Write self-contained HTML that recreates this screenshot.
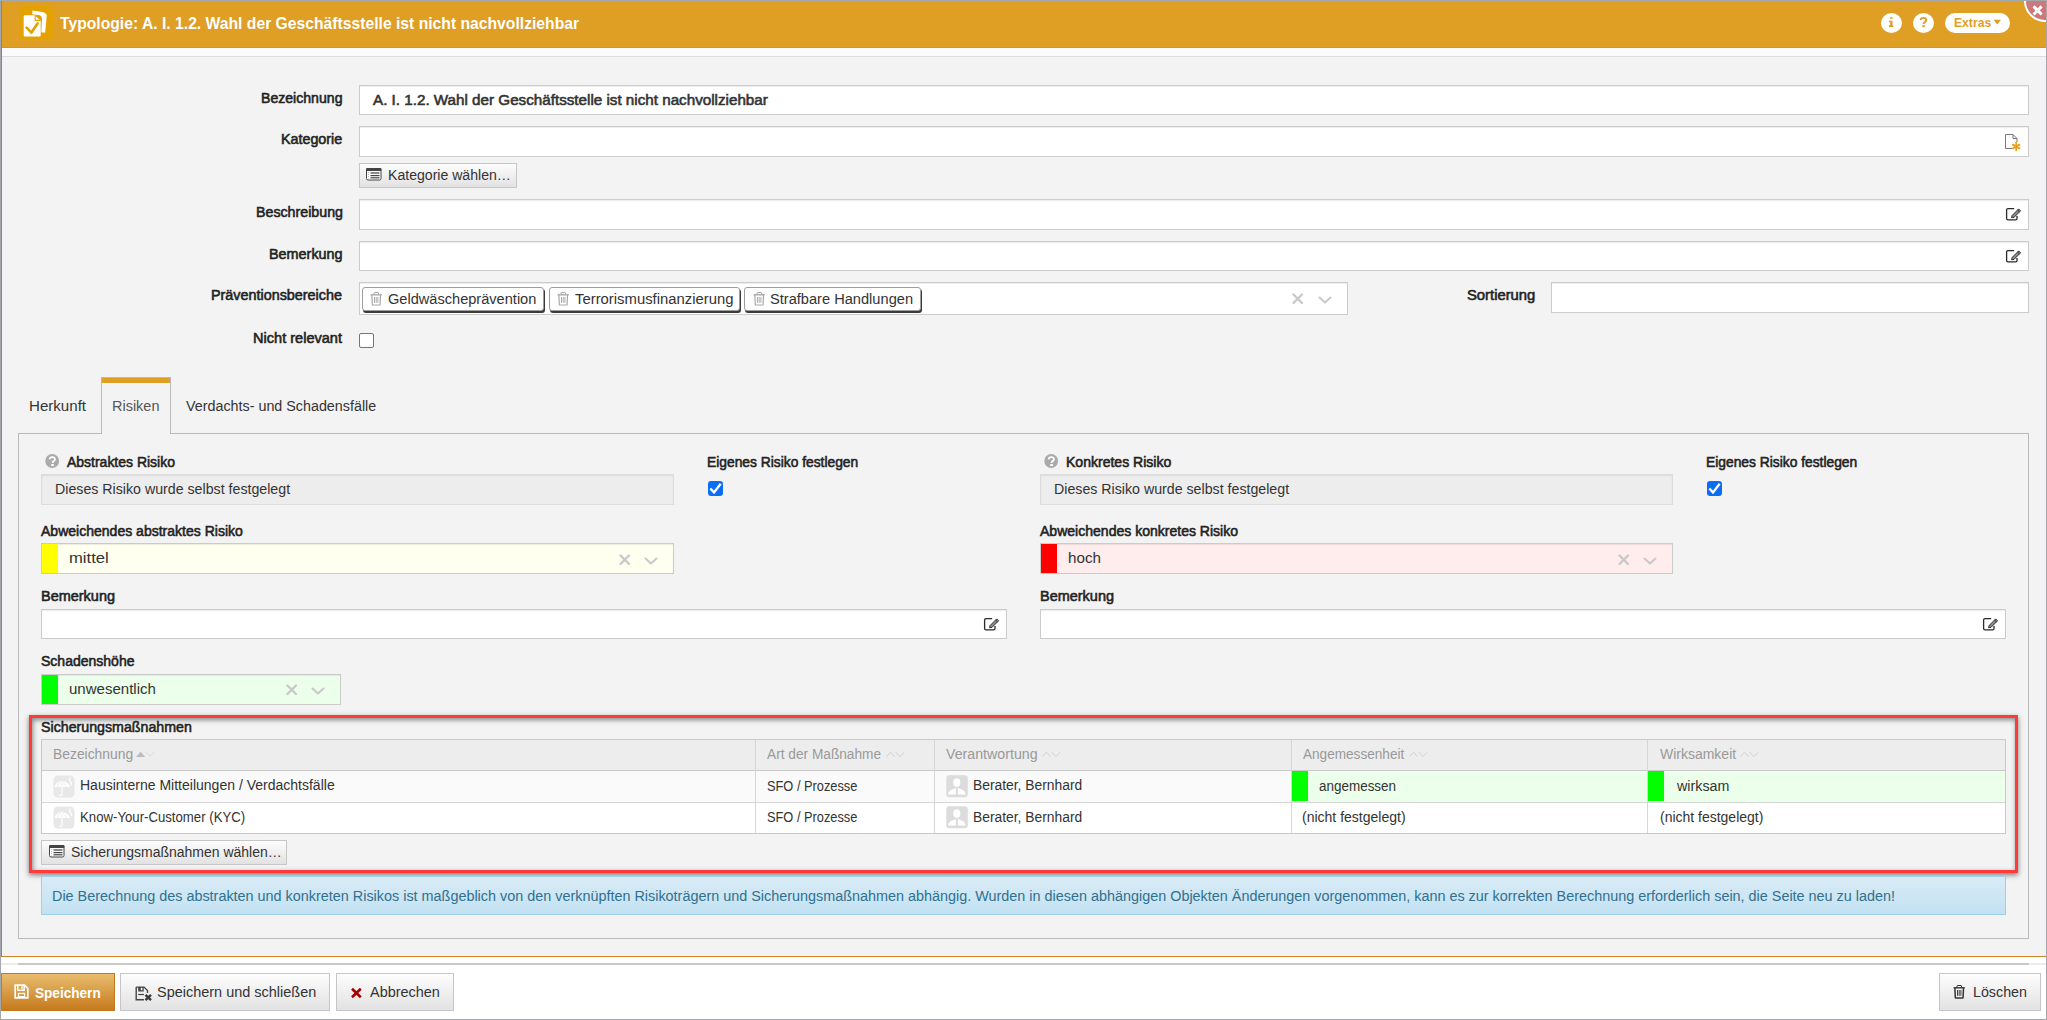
<!DOCTYPE html>
<html><head><meta charset="utf-8"><title>Typologie</title>
<style>
html,body{margin:0;padding:0;width:2047px;height:1020px;overflow:hidden;background:#f3f3f3;font-family:"Liberation Sans",sans-serif;position:relative}
.a{position:absolute;box-sizing:border-box}
.t{position:absolute;white-space:nowrap;line-height:1;transform-origin:0 0;font-family:"Liberation Sans",sans-serif}
.inp{position:absolute;box-sizing:border-box;background:#fff;border:1px solid #cbcbcb;box-shadow:inset 0 1px 1px rgba(0,0,0,.075)}
.btn{position:absolute;box-sizing:border-box;border:1px solid #c6c6c6;background:linear-gradient(#fdfdfd,#e2e2e2)}
.chip{position:absolute;box-sizing:border-box;background:#fff;border:1px solid #9e9e9e;border-radius:3px;box-shadow:1px 2px 0 #3a3a3a}
svg{position:absolute;overflow:visible}

</style></head><body>
<!-- window frame -->
<div class="a" style="left:0;top:0;width:2047px;height:1px;background:#a4a8ac"></div>
<div class="a" style="left:0;top:0;width:1px;height:1020px;background:#a4a8ac"></div>
<div class="a" style="left:2046px;top:0;width:1px;height:1020px;background:#a4a8ac"></div>
<div class="a" style="left:0;top:1019px;width:2047px;height:1px;background:#a4a8ac"></div>
<!-- header -->
<div class="a" style="left:1px;top:1px;width:2045px;height:47px;background:#df9e24;border-bottom:1px solid #dd9418"></div>
<div class="a" style="left:1px;top:1px;width:1px;height:956px;background:#c7791a"></div>
<div class="a" style="left:1px;top:956px;width:2045px;height:1px;background:#cf8424"></div>
<div class="a" style="left:2px;top:48px;width:2044px;height:8px;background:#fbfbfb"></div>
<div class="a" style="left:2px;top:56px;width:2044px;height:1px;background:#dcdcdc"></div>
<!-- header icon -->
<div class="a" style="left:19px;top:6px;width:34px;height:34px;border-radius:5px;background:#e4a200"></div>
<svg style="left:19px;top:6px" width="34" height="34" viewBox="0 0 34 34">
 <path d="M13.5 4.6 L24.5 6.3 Q26.5 6.8 27.8 9 L26.2 26.8 L22.3 26.3 L23 12.5 Q22.8 10.3 20.8 9.3 L13.2 8.2 Z" fill="#fff"/>
 <path d="M6 9.2 L15.8 9.2 L21.7 14.8 L21.7 29.2 Q21.7 30.4 20.5 30.4 L6 30.4 Q4.7 30.4 4.7 29.2 L4.7 10.4 Q4.7 9.2 6 9.2 Z" fill="#fff"/>
 <path d="M16.2 9.5 L16.2 14.4 L21.5 14.4" fill="none" stroke="#e4a200" stroke-width="1.1"/>
 <path d="M7.6 21.6 L12.4 26.6 L18.6 17.4" fill="none" stroke="#e4a200" stroke-width="2.7" stroke-linecap="round" stroke-linejoin="round"/>
</svg>
<!-- header right buttons -->
<div class="a" style="left:1881px;top:13px;width:21px;height:20px;border-radius:50%;background:#fff"></div>
<div class="a" style="left:1913px;top:13px;width:21px;height:20px;border-radius:50%;background:#fff"></div>
<svg style="left:1888px;top:16px" width="7" height="12"><rect x="2.2" y="1.2" width="2.4" height="1.6" fill="#df9e24"/><path d="M1 4.8 H4.5 V9.3 H5.3 V10.9 H1 V9.3 H2.2 V6.3 H1 Z" fill="#df9e24"/></svg>
<svg style="left:1918px;top:16px" width="11" height="12"><path d="M2.6 4.2 Q2.8 1.9 5.4 1.9 Q8.2 1.9 8.2 4.1 Q8.2 5.4 6.6 6.3 Q5.6 6.9 5.6 8" fill="none" stroke="#df9e24" stroke-width="1.9"/><rect x="4.3" y="9.2" width="2.5" height="1.9" fill="#df9e24"/></svg>
<div class="a" style="left:1945px;top:13px;width:65px;height:20px;border-radius:10px;background:#fff"></div>
<svg style="left:1993px;top:19px" width="9" height="7"><path d="M0.5 0.8 L8 0.8 L4.25 5.5 Z" fill="#df9e24"/></svg>
<!-- close -->
<div class="a" style="left:2024px;top:-20px;width:42px;height:42px;border-radius:50%;background:#c97a7a;border:2px solid #fff"></div>
<svg style="left:2032px;top:5px" width="11" height="11"><path d="M2.6 2.4 L8.6 8.4 M8.6 2.4 L2.6 8.4" stroke="#fff" stroke-width="2.9" stroke-linecap="square"/></svg>
<div class="a" style="left:0;top:0;width:2047px;height:1px;background:#a4a8ac"></div>
<div class="a" style="left:2046px;top:0;width:1px;height:1020px;background:#a4a8ac"></div>
<!-- footer area -->
<div class="a" style="left:1px;top:957px;width:2045px;height:62px;background:#fff"></div>
<div class="a" style="left:1px;top:963px;width:2045px;height:2px;background:#ececec"></div>
<div class="a" style="left:18px;top:963px;width:2011px;height:2px;background:#c9c9c9"></div>
<!-- form -->
<div class="inp" style="left:359px;top:85px;width:1670px;height:30px"></div>
<div class="inp" style="left:359px;top:126px;width:1670px;height:31px"></div>
<div class="btn" style="left:359px;top:163px;width:158px;height:25px"></div>
<div class="inp" style="left:359px;top:199px;width:1670px;height:31px"></div>
<div class="inp" style="left:359px;top:241px;width:1670px;height:30px"></div>
<div class="inp" style="left:359px;top:282px;width:989px;height:33px"></div>
<div class="inp" style="left:1551px;top:282px;width:478px;height:31px"></div>
<div class="a" style="left:359px;top:333px;width:15px;height:15px;border:1px solid #767676;border-radius:2px;background:#fff"></div>
<div class="chip" style="left:362px;top:287px;width:182px;height:24px"></div>
<div class="chip" style="left:549px;top:287px;width:191px;height:24px"></div>
<div class="chip" style="left:744px;top:287px;width:177px;height:24px"></div>
<!-- tabs -->
<div class="a" style="left:18px;top:433px;width:2011px;height:506px;border:1px solid #b9b9b9;border-top-color:#b9b9b9"></div>
<div class="a" style="left:101px;top:377px;width:70px;height:57px;border:1px solid #b9b9b9;border-bottom:none;background:#f3f3f3"></div>
<div class="a" style="left:102px;top:378px;width:68px;height:5px;background:#df9e24"></div>
<!-- risk left -->
<div class="a" style="left:41px;top:474px;width:633px;height:31px;background:#ededed;border:1px solid #dcdcdc;box-shadow:inset 0 1px 2px rgba(0,0,0,.07)"></div>
<div class="a" style="left:41px;top:543px;width:633px;height:31px;background:#fffff0;border:1px solid #cbcbcb;box-shadow:inset 0 1px 1px rgba(0,0,0,.075)"></div>
<div class="a" style="left:42px;top:544px;width:16px;height:29px;background:#ffff00"></div>
<div class="inp" style="left:41px;top:609px;width:966px;height:30px"></div>
<div class="a" style="left:41px;top:674px;width:300px;height:31px;background:#ebffeb;border:1px solid #cbcbcb;box-shadow:inset 0 1px 1px rgba(0,0,0,.075)"></div>
<div class="a" style="left:42px;top:675px;width:16px;height:29px;background:#00ff00"></div>
<div class="a" style="left:708px;top:481px;width:15px;height:15px;border-radius:3px;background:#0b6cf6"></div>
<!-- risk right -->
<div class="a" style="left:1040px;top:474px;width:633px;height:31px;background:#ededed;border:1px solid #dcdcdc;box-shadow:inset 0 1px 2px rgba(0,0,0,.07)"></div>
<div class="a" style="left:1040px;top:543px;width:633px;height:31px;background:#ffecec;border:1px solid #cbcbcb;box-shadow:inset 0 1px 1px rgba(0,0,0,.075)"></div>
<div class="a" style="left:1041px;top:544px;width:16px;height:29px;background:#ff0000"></div>
<div class="inp" style="left:1040px;top:609px;width:966px;height:30px"></div>
<div class="a" style="left:1707px;top:481px;width:15px;height:15px;border-radius:3px;background:#0b6cf6"></div>
<!-- table -->
<div class="a" style="left:41px;top:739px;width:1965px;height:95px;border:1px solid #c9c9c9;background:#fff"></div>
<div class="a" style="left:42px;top:740px;width:1963px;height:30px;background:#ededed"></div>
<div class="a" style="left:42px;top:770px;width:1963px;height:1px;background:#c9c9c9"></div>
<div class="a" style="left:42px;top:771px;width:1963px;height:31px;background:#fafafa"></div>
<div class="a" style="left:42px;top:802px;width:1963px;height:1px;background:#d6d6d6"></div>
<div class="a" style="left:1292px;top:771px;width:713px;height:31px;background:#ebffeb"></div>
<div class="a" style="left:1292px;top:771px;width:16px;height:30px;background:#00ff00"></div>
<div class="a" style="left:1648px;top:771px;width:16px;height:30px;background:#00ff00"></div>
<div class="a" style="left:755px;top:740px;width:1px;height:93px;background:#d6d6d6"></div>
<div class="a" style="left:934px;top:740px;width:1px;height:93px;background:#d6d6d6"></div>
<div class="a" style="left:1291px;top:740px;width:1px;height:93px;background:#d6d6d6"></div>
<div class="a" style="left:1647px;top:740px;width:1px;height:93px;background:#d6d6d6"></div>
<div class="btn" style="left:41px;top:840px;width:246px;height:25px"></div>
<!-- red highlight -->
<div class="a" style="left:29px;top:715px;width:1989px;height:158px;border:3px solid #ff3a3a;box-shadow:0 2px 5px rgba(0,0,0,.5), inset 1px 2px 5px rgba(0,0,0,.45)"></div>
<!-- alert -->
<div class="a" style="left:41px;top:876px;width:1965px;height:39px;border:1px solid #9fd0ea;background:linear-gradient(#d9ecf6,#c2e1f2)"></div>
<!-- footer buttons -->
<div class="a" style="left:1px;top:973px;width:114px;height:38px;border:1px solid #c37a1e;background:linear-gradient(#e9bd6e,#c67a1d)"></div>
<div class="btn" style="left:120px;top:973px;width:210px;height:38px"></div>
<div class="btn" style="left:336px;top:973px;width:118px;height:38px"></div>
<div class="btn" style="left:1939px;top:973px;width:102px;height:38px"></div>
<!-- ICONS -->
<svg style="left:2005px;top:207px" width="17" height="15" viewBox="0 0 17 15"><path d="M9.2 1.6 H3 Q1.6 1.6 1.6 3 V11.4 Q1.6 12.8 3 12.8 H10.6 Q12 12.8 12 11.4 V9" fill="none" stroke="#2a2a2a" stroke-width="1.3"/><path d="M6.6 10.8 L7.1 8.5 L13.7 1.9 L15.6 3.8 L9 10.4 Z" fill="#8a8a8a" stroke="#222" stroke-width="0.9" stroke-linejoin="round"/><path d="M12.6 3 L14.5 4.9" stroke="#222" stroke-width="0.9"/></svg>
<svg style="left:2005px;top:249px" width="17" height="15" viewBox="0 0 17 15"><path d="M9.2 1.6 H3 Q1.6 1.6 1.6 3 V11.4 Q1.6 12.8 3 12.8 H10.6 Q12 12.8 12 11.4 V9" fill="none" stroke="#2a2a2a" stroke-width="1.3"/><path d="M6.6 10.8 L7.1 8.5 L13.7 1.9 L15.6 3.8 L9 10.4 Z" fill="#8a8a8a" stroke="#222" stroke-width="0.9" stroke-linejoin="round"/><path d="M12.6 3 L14.5 4.9" stroke="#222" stroke-width="0.9"/></svg>
<svg style="left:983px;top:617px" width="17" height="15" viewBox="0 0 17 15"><path d="M9.2 1.6 H3 Q1.6 1.6 1.6 3 V11.4 Q1.6 12.8 3 12.8 H10.6 Q12 12.8 12 11.4 V9" fill="none" stroke="#2a2a2a" stroke-width="1.3"/><path d="M6.6 10.8 L7.1 8.5 L13.7 1.9 L15.6 3.8 L9 10.4 Z" fill="#8a8a8a" stroke="#222" stroke-width="0.9" stroke-linejoin="round"/><path d="M12.6 3 L14.5 4.9" stroke="#222" stroke-width="0.9"/></svg>
<svg style="left:1982px;top:617px" width="17" height="15" viewBox="0 0 17 15"><path d="M9.2 1.6 H3 Q1.6 1.6 1.6 3 V11.4 Q1.6 12.8 3 12.8 H10.6 Q12 12.8 12 11.4 V9" fill="none" stroke="#2a2a2a" stroke-width="1.3"/><path d="M6.6 10.8 L7.1 8.5 L13.7 1.9 L15.6 3.8 L9 10.4 Z" fill="#8a8a8a" stroke="#222" stroke-width="0.9" stroke-linejoin="round"/><path d="M12.6 3 L14.5 4.9" stroke="#222" stroke-width="0.9"/></svg>
<!-- kategorie doc icon -->
<svg style="left:2004px;top:133px" width="20" height="20" viewBox="0 0 20 20">
 <path d="M1.5 1.5 H9 L13 5.5 V9" fill="none" stroke="#777" stroke-width="1"/>
 <path d="M1.5 1.5 V15.5 H8" fill="none" stroke="#777" stroke-width="1"/>
 <path d="M9 1.5 V5.5 H13" fill="none" stroke="#777" stroke-width="1"/>
 <g stroke="#e8a01e" stroke-width="1.8" stroke-linecap="round"><path d="M12.2 9.7 V17.3"/><path d="M8.9 11.6 L15.5 15.4"/><path d="M8.9 15.4 L15.5 11.6"/></g>
</svg>
<svg style="left:366px;top:168px" width="16" height="13" viewBox="0 0 16 13"><rect x="0.5" y="0.5" width="14.5" height="11.5" rx="1.5" fill="#fff" stroke="#444"/><rect x="0" y="0" width="15.5" height="3" rx="1.2" fill="#444"/><rect x="4.5" y="4" width="9" height="2" fill="#8a8a8a"/><rect x="4.5" y="7" width="9" height="1.2" fill="#444"/><rect x="4.5" y="9.2" width="9" height="1.2" fill="#444"/><path d="M2.5 4 V10.5" stroke="#bbb" stroke-width="1" stroke-dasharray="1 1"/></svg>
<svg style="left:49px;top:845px" width="16" height="13" viewBox="0 0 16 13"><rect x="0.5" y="0.5" width="14.5" height="11.5" rx="1.5" fill="#fff" stroke="#444"/><rect x="0" y="0" width="15.5" height="3" rx="1.2" fill="#444"/><rect x="4.5" y="4" width="9" height="2" fill="#8a8a8a"/><rect x="4.5" y="7" width="9" height="1.2" fill="#444"/><rect x="4.5" y="9.2" width="9" height="1.2" fill="#444"/><path d="M2.5 4 V10.5" stroke="#bbb" stroke-width="1" stroke-dasharray="1 1"/></svg>
<svg style="left:370px;top:292px" width="13" height="14" viewBox="0 0 13 14"><path d="M0.6 2.8 H11.8" stroke="#a9a9a9" stroke-width="1.4"/><path d="M4 2.5 V1 Q4 0.5 4.5 0.5 H8 Q8.5 0.5 8.5 1 V2.5" fill="none" stroke="#a9a9a9" stroke-width="1"/><path d="M1.9 3 L2.3 12.4 Q2.3 13 3 13 H9.5 Q10.1 13 10.1 12.4 L10.5 3" fill="none" stroke="#a9a9a9" stroke-width="1.2"/><path d="M4.5 5 V10.8 M6.2 5 V10.8 M7.9 5 V10.8" stroke="#a9a9a9" stroke-width="0.95"/></svg>
<svg style="left:557px;top:292px" width="13" height="14" viewBox="0 0 13 14"><path d="M0.6 2.8 H11.8" stroke="#a9a9a9" stroke-width="1.4"/><path d="M4 2.5 V1 Q4 0.5 4.5 0.5 H8 Q8.5 0.5 8.5 1 V2.5" fill="none" stroke="#a9a9a9" stroke-width="1"/><path d="M1.9 3 L2.3 12.4 Q2.3 13 3 13 H9.5 Q10.1 13 10.1 12.4 L10.5 3" fill="none" stroke="#a9a9a9" stroke-width="1.2"/><path d="M4.5 5 V10.8 M6.2 5 V10.8 M7.9 5 V10.8" stroke="#a9a9a9" stroke-width="0.95"/></svg>
<svg style="left:753px;top:292px" width="13" height="14" viewBox="0 0 13 14"><path d="M0.6 2.8 H11.8" stroke="#a9a9a9" stroke-width="1.4"/><path d="M4 2.5 V1 Q4 0.5 4.5 0.5 H8 Q8.5 0.5 8.5 1 V2.5" fill="none" stroke="#a9a9a9" stroke-width="1"/><path d="M1.9 3 L2.3 12.4 Q2.3 13 3 13 H9.5 Q10.1 13 10.1 12.4 L10.5 3" fill="none" stroke="#a9a9a9" stroke-width="1.2"/><path d="M4.5 5 V10.8 M6.2 5 V10.8 M7.9 5 V10.8" stroke="#a9a9a9" stroke-width="0.95"/></svg>
<svg style="left:1953px;top:985px" width="13" height="14" viewBox="0 0 13 14"><path d="M0.6 2.8 H11.8" stroke="#333" stroke-width="1.4"/><path d="M4 2.5 V1 Q4 0.5 4.5 0.5 H8 Q8.5 0.5 8.5 1 V2.5" fill="none" stroke="#333" stroke-width="1"/><path d="M1.9 3 L2.3 12.4 Q2.3 13 3 13 H9.5 Q10.1 13 10.1 12.4 L10.5 3" fill="none" stroke="#333" stroke-width="1.5"/><path d="M4.5 5 V10.8 M6.2 5 V10.8 M7.9 5 V10.8" stroke="#333" stroke-width="0.95"/></svg>
<svg style="left:1292px;top:293px" width="12" height="12"><path d="M1.5 1.5 L10 10 M10 1.5 L1.5 10" stroke="#c9c9c9" stroke-width="2.4" stroke-linecap="round"/></svg><svg style="left:1318px;top:295.5px" width="14" height="8"><path d="M1.5 1.5 L7 6.5 L12.5 1.5" fill="none" stroke="#c9c9c9" stroke-width="2.1" stroke-linecap="round" stroke-linejoin="round"/></svg>
<svg style="left:619px;top:554px" width="12" height="12"><path d="M1.5 1.5 L10 10 M10 1.5 L1.5 10" stroke="#c9c9c9" stroke-width="2.4" stroke-linecap="round"/></svg><svg style="left:644px;top:556.5px" width="14" height="8"><path d="M1.5 1.5 L7 6.5 L12.5 1.5" fill="none" stroke="#c9c9c9" stroke-width="2.1" stroke-linecap="round" stroke-linejoin="round"/></svg>
<svg style="left:1618px;top:554px" width="12" height="12"><path d="M1.5 1.5 L10 10 M10 1.5 L1.5 10" stroke="#c9c9c9" stroke-width="2.4" stroke-linecap="round"/></svg><svg style="left:1643px;top:556.5px" width="14" height="8"><path d="M1.5 1.5 L7 6.5 L12.5 1.5" fill="none" stroke="#c9c9c9" stroke-width="2.1" stroke-linecap="round" stroke-linejoin="round"/></svg>
<svg style="left:286px;top:683.5px" width="12" height="12"><path d="M1.5 1.5 L10 10 M10 1.5 L1.5 10" stroke="#c9c9c9" stroke-width="2.4" stroke-linecap="round"/></svg><svg style="left:311px;top:686.5px" width="14" height="8"><path d="M1.5 1.5 L7 6.5 L12.5 1.5" fill="none" stroke="#c9c9c9" stroke-width="2.1" stroke-linecap="round" stroke-linejoin="round"/></svg>
<svg style="left:708px;top:481px" width="15" height="15"><path d="M3.1 8.4 L6 11.4 L12 3.6" fill="none" stroke="#fff" stroke-width="2.3" stroke-linecap="square" stroke-linejoin="miter"/></svg>
<svg style="left:1707px;top:481px" width="15" height="15"><path d="M3.1 8.4 L6 11.4 L12 3.6" fill="none" stroke="#fff" stroke-width="2.3" stroke-linecap="square" stroke-linejoin="miter"/></svg>
<svg style="left:45px;top:454px" width="15" height="15" viewBox="0 0 15 15"><circle cx="7.2" cy="7" r="6.9" fill="#aaa"/><path d="M4.6 5.3 Q4.8 3.1 7.3 3.1 Q9.9 3.1 9.9 5.2 Q9.9 6.5 8.4 7.3 Q7.6 7.8 7.6 9" fill="none" stroke="#fff" stroke-width="1.8"/><rect x="6.3" y="10" width="2.5" height="2" fill="#fff"/></svg>
<svg style="left:1044px;top:454px" width="15" height="15" viewBox="0 0 15 15"><circle cx="7.2" cy="7" r="6.9" fill="#aaa"/><path d="M4.6 5.3 Q4.8 3.1 7.3 3.1 Q9.9 3.1 9.9 5.2 Q9.9 6.5 8.4 7.3 Q7.6 7.8 7.6 9" fill="none" stroke="#fff" stroke-width="1.8"/><rect x="6.3" y="10" width="2.5" height="2" fill="#fff"/></svg>
<svg style="left:136px;top:751px" width="20" height="8"><path d="M0 6 L4.6 0.8 L9.2 6 Z" fill="#bcbcbc"/><path d="M9.6 0.8 L13.9 5.3 L18.2 0.8" fill="none" stroke="#dcdcdc" stroke-width="1"/></svg>
<svg style="left:886px;top:751px" width="20" height="8"><path d="M0.5 5.6 L4.5 1.2 L8.5 5.6" fill="none" stroke="#d0d0d0" stroke-width="1"/><path d="M9.6 1.2 L13.9 5.6 L18.2 1.2" fill="none" stroke="#d0d0d0" stroke-width="1"/></svg>
<svg style="left:1042px;top:751px" width="20" height="8"><path d="M0.5 5.6 L4.5 1.2 L8.5 5.6" fill="none" stroke="#d0d0d0" stroke-width="1"/><path d="M9.6 1.2 L13.9 5.6 L18.2 1.2" fill="none" stroke="#d0d0d0" stroke-width="1"/></svg>
<svg style="left:1409px;top:751px" width="20" height="8"><path d="M0.5 5.6 L4.5 1.2 L8.5 5.6" fill="none" stroke="#d0d0d0" stroke-width="1"/><path d="M9.6 1.2 L13.9 5.6 L18.2 1.2" fill="none" stroke="#d0d0d0" stroke-width="1"/></svg>
<svg style="left:1740px;top:751px" width="20" height="8"><path d="M0.5 5.6 L4.5 1.2 L8.5 5.6" fill="none" stroke="#d0d0d0" stroke-width="1"/><path d="M9.6 1.2 L13.9 5.6 L18.2 1.2" fill="none" stroke="#d0d0d0" stroke-width="1"/></svg>
<svg style="left:53px;top:775px" width="22" height="23" viewBox="0 0 22 23"><rect x="0.5" y="0.5" width="21" height="22" rx="4.5" fill="#e8e8e8"/><path d="M1.5 12 Q3 7 7.5 6 Q12 5.5 15.5 9 Q16.5 10.5 16.8 12 Z" fill="#fff"/><path d="M4.5 12 Q5.5 8 7.5 6.5 M9 12 Q9 7.5 7.5 6.5 M13.5 12 Q12 8 9 6.5" stroke="#e8e8e8" stroke-width="0.8" fill="none"/><path d="M9 12 V19 Q9 20.5 7.7 20.5 Q6.5 20.5 6.3 19.3" fill="none" stroke="#fff" stroke-width="1.1"/><path d="M17.5 2.5 Q15.5 4.5 17.5 6.5 Q19.5 8.5 17.8 10.5" fill="none" stroke="#fff" stroke-width="1.1"/></svg>
<svg style="left:53px;top:806px" width="22" height="23" viewBox="0 0 22 23"><rect x="0.5" y="0.5" width="21" height="22" rx="4.5" fill="#e8e8e8"/><path d="M1.5 12 Q3 7 7.5 6 Q12 5.5 15.5 9 Q16.5 10.5 16.8 12 Z" fill="#fff"/><path d="M4.5 12 Q5.5 8 7.5 6.5 M9 12 Q9 7.5 7.5 6.5 M13.5 12 Q12 8 9 6.5" stroke="#e8e8e8" stroke-width="0.8" fill="none"/><path d="M9 12 V19 Q9 20.5 7.7 20.5 Q6.5 20.5 6.3 19.3" fill="none" stroke="#fff" stroke-width="1.1"/><path d="M17.5 2.5 Q15.5 4.5 17.5 6.5 Q19.5 8.5 17.8 10.5" fill="none" stroke="#fff" stroke-width="1.1"/></svg>
<svg style="left:946px;top:775px" width="22" height="23" viewBox="0 0 22 23"><rect x="0.3" y="0.3" width="21.5" height="22" rx="3" fill="#dcdcdc"/><ellipse cx="10.8" cy="7.6" rx="3.6" ry="4.3" fill="#fff"/><path d="M2 19.5 Q2.5 15 8.5 13.5 L9.8 12.8 V19.5 Z M19.7 19.5 Q19.2 15 13.2 13.5 L11.9 12.8 V19.5 Z" fill="#fff"/></svg>
<svg style="left:946px;top:806px" width="22" height="23" viewBox="0 0 22 23"><rect x="0.3" y="0.3" width="21.5" height="22" rx="3" fill="#dcdcdc"/><ellipse cx="10.8" cy="7.6" rx="3.6" ry="4.3" fill="#fff"/><path d="M2 19.5 Q2.5 15 8.5 13.5 L9.8 12.8 V19.5 Z M19.7 19.5 Q19.2 15 13.2 13.5 L11.9 12.8 V19.5 Z" fill="#fff"/></svg>
<svg style="left:14px;top:984px" width="15" height="15" viewBox="0 0 15 15"><path d="M1.2 1.2 H10.5 L13.8 4.5 V13.8 H1.2 Z" fill="none" stroke="#fff" stroke-width="1.7"/><path d="M3.8 1.2 V6.3 H10.2 V1.2" fill="none" stroke="#fff" stroke-width="1.5"/><rect x="7.3" y="2.3" width="1.4" height="2.6" fill="#fff"/><rect x="3.8" y="8.8" width="7.4" height="4.2" fill="#fff"/><rect x="5" y="10.3" width="5" height="1.6" fill="#c98a35"/></svg>
<svg style="left:135px;top:986px" width="19" height="16" viewBox="0 0 19 16"><path d="M1.2 1.1 H9 L12.5 4.6 V7" fill="none" stroke="#444" stroke-width="1.4"/><path d="M1.2 1.1 V13.8 H9" fill="none" stroke="#444" stroke-width="1.4"/><rect x="3.2" y="1" width="5.5" height="4.5" fill="#444"/><rect x="5.8" y="1.8" width="1.6" height="2.4" fill="#fff"/><path d="M3.2 8.5 H9" stroke="#444" stroke-width="1.2"/><path d="M10.5 8.8 L16 14.2 M16 8.8 L10.5 14.2" stroke="#3a3a3a" stroke-width="2.4"/></svg>
<svg style="left:350px;top:987px" width="13" height="12"><path d="M2 1.8 L10.8 10.3 M10.8 1.8 L2 10.3" stroke="#a80000" stroke-width="2.6"/></svg>

<div class="t" style="left:59.77px;top:15.27px;font-size:17.2px;font-weight:700;color:#fff;transform:scaleX(0.9129)">Typologie: A. I. 1.2. Wahl der Geschäftsstelle ist nicht nachvollziehbar</div>
<div class="t" style="left:1953.55px;top:17.09px;font-size:12.2px;font-weight:700;color:#df9e24;transform:scaleX(0.9972)">Extras</div>
<div class="t" style="left:261.25px;top:90.97px;font-size:14px;font-weight:400;color:#222;-webkit-text-stroke:0.550px #222;transform:scaleX(1.0063)">Bezeichnung</div>
<div class="t" style="left:281.23px;top:131.77px;font-size:14px;font-weight:400;color:#222;-webkit-text-stroke:0.550px #222;transform:scaleX(1.0213)">Kategorie</div>
<div class="t" style="left:255.64px;top:205.17px;font-size:14px;font-weight:400;color:#222;-webkit-text-stroke:0.550px #222;transform:scaleX(1.0160)">Beschreibung</div>
<div class="t" style="left:269.03px;top:247.17px;font-size:14px;font-weight:400;color:#222;-webkit-text-stroke:0.550px #222;transform:scaleX(1.0278)">Bemerkung</div>
<div class="t" style="left:211.43px;top:287.87px;font-size:14px;font-weight:400;color:#222;-webkit-text-stroke:0.550px #222;transform:scaleX(1.0261)">Präventionsbereiche</div>
<div class="t" style="left:252.82px;top:331.37px;font-size:14px;font-weight:400;color:#222;-webkit-text-stroke:0.550px #222;transform:scaleX(1.0400)">Nicht relevant</div>
<div class="t" style="left:1466.94px;top:288.07px;font-size:14px;font-weight:400;color:#222;-webkit-text-stroke:0.550px #222;transform:scaleX(1.0573)">Sortierung</div>
<div class="t" style="left:372.87px;top:92.57px;font-size:14px;font-weight:400;color:#333;-webkit-text-stroke:0.550px #333;transform:scaleX(1.0857)">A. I. 1.2. Wahl der Geschäftsstelle ist nicht nachvollziehbar</div>
<div class="t" style="left:387.74px;top:168.17px;font-size:14px;font-weight:400;color:#333;transform:scaleX(1.0059)">Kategorie wählen…</div>
<div class="t" style="left:387.92px;top:292.07px;font-size:14px;font-weight:400;color:#333;transform:scaleX(1.0416)">Geldwäscheprävention</div>
<div class="t" style="left:574.93px;top:292.07px;font-size:14px;font-weight:400;color:#333;transform:scaleX(1.0610)">Terrorismusfinanzierung</div>
<div class="t" style="left:770.22px;top:292.07px;font-size:14px;font-weight:400;color:#333;transform:scaleX(1.0440)">Strafbare Handlungen</div>
<div class="t" style="left:29.25px;top:399.07px;font-size:14px;font-weight:400;color:#333;transform:scaleX(1.0777)">Herkunft</div>
<div class="t" style="left:111.91px;top:399.07px;font-size:14px;font-weight:400;color:#555;transform:scaleX(1.0331)">Risiken</div>
<div class="t" style="left:185.60px;top:398.77px;font-size:14px;font-weight:400;color:#333;transform:scaleX(1.0226)">Verdachts- und Schadensfälle</div>
<div class="t" style="left:67.15px;top:454.97px;font-size:14px;font-weight:400;color:#222;-webkit-text-stroke:0.550px #222;transform:scaleX(0.9981)">Abstraktes Risiko</div>
<div class="t" style="left:706.76px;top:454.97px;font-size:14px;font-weight:400;color:#222;-webkit-text-stroke:0.550px #222;transform:scaleX(0.9862)">Eigenes Risiko festlegen</div>
<div class="t" style="left:54.53px;top:481.67px;font-size:14px;font-weight:400;color:#333;transform:scaleX(1.0139)">Dieses Risiko wurde selbst festgelegt</div>
<div class="t" style="left:41.25px;top:523.87px;font-size:14px;font-weight:400;color:#222;-webkit-text-stroke:0.550px #222;transform:scaleX(1.0015)">Abweichendes abstraktes Risiko</div>
<div class="t" style="left:68.71px;top:551.17px;font-size:14px;font-weight:400;color:#333;transform:scaleX(1.1873)">mittel</div>
<div class="t" style="left:40.62px;top:588.97px;font-size:14px;font-weight:400;color:#222;-webkit-text-stroke:0.550px #222;transform:scaleX(1.0335)">Bemerkung</div>
<div class="t" style="left:40.75px;top:653.97px;font-size:14px;font-weight:400;color:#222;-webkit-text-stroke:0.550px #222;transform:scaleX(1.0005)">Schadenshöhe</div>
<div class="t" style="left:68.93px;top:681.67px;font-size:14px;font-weight:400;color:#333;transform:scaleX(1.0734)">unwesentlich</div>
<div class="t" style="left:1065.65px;top:454.97px;font-size:14px;font-weight:400;color:#222;-webkit-text-stroke:0.550px #222;transform:scaleX(1.0019)">Konkretes Risiko</div>
<div class="t" style="left:1705.76px;top:454.97px;font-size:14px;font-weight:400;color:#222;-webkit-text-stroke:0.550px #222;transform:scaleX(0.9862)">Eigenes Risiko festlegen</div>
<div class="t" style="left:1053.63px;top:481.67px;font-size:14px;font-weight:400;color:#333;transform:scaleX(1.0139)">Dieses Risiko wurde selbst festgelegt</div>
<div class="t" style="left:1040.25px;top:523.87px;font-size:14px;font-weight:400;color:#222;-webkit-text-stroke:0.550px #222;transform:scaleX(1.0020)">Abweichendes konkretes Risiko</div>
<div class="t" style="left:1067.92px;top:551.17px;font-size:14px;font-weight:400;color:#333;transform:scaleX(1.0842)">hoch</div>
<div class="t" style="left:1039.62px;top:588.97px;font-size:14px;font-weight:400;color:#222;-webkit-text-stroke:0.550px #222;transform:scaleX(1.0335)">Bemerkung</div>
<div class="t" style="left:41.35px;top:719.67px;font-size:14px;font-weight:400;color:#222;-webkit-text-stroke:0.550px #222;transform:scaleX(1.0152)">Sicherungsmaßnahmen</div>
<div class="t" style="left:52.56px;top:746.87px;font-size:14px;font-weight:400;color:#999;transform:scaleX(0.9905)">Bezeichnung</div>
<div class="t" style="left:767.40px;top:746.87px;font-size:14px;font-weight:400;color:#999;transform:scaleX(0.9776)">Art der Maßnahme</div>
<div class="t" style="left:946.10px;top:746.87px;font-size:14px;font-weight:400;color:#999;transform:scaleX(1.0145)">Verantwortung</div>
<div class="t" style="left:1302.80px;top:746.87px;font-size:14px;font-weight:400;color:#999;transform:scaleX(0.9707)">Angemessenheit</div>
<div class="t" style="left:1659.80px;top:746.87px;font-size:14px;font-weight:400;color:#999;transform:scaleX(0.9987)">Wirksamkeit</div>
<div class="t" style="left:80.05px;top:777.97px;font-size:14px;font-weight:400;color:#333;transform:scaleX(1.0008)">Hausinterne Mitteilungen / Verdachtsfälle</div>
<div class="t" style="left:767.01px;top:778.77px;font-size:14px;font-weight:400;color:#333;transform:scaleX(0.9149)">SFO / Prozesse</div>
<div class="t" style="left:972.66px;top:777.67px;font-size:14px;font-weight:400;color:#333;transform:scaleX(0.9880)">Berater, Bernhard</div>
<div class="t" style="left:1319.12px;top:779.27px;font-size:14px;font-weight:400;color:#333;transform:scaleX(0.9613)">angemessen</div>
<div class="t" style="left:1676.50px;top:779.27px;font-size:14px;font-weight:400;color:#333;transform:scaleX(1.0198)">wirksam</div>
<div class="t" style="left:80.12px;top:809.97px;font-size:14px;font-weight:400;color:#333;transform:scaleX(0.9420)">Know-Your-Customer (KYC)</div>
<div class="t" style="left:767.01px;top:809.97px;font-size:14px;font-weight:400;color:#333;transform:scaleX(0.9149)">SFO / Prozesse</div>
<div class="t" style="left:972.66px;top:809.57px;font-size:14px;font-weight:400;color:#333;transform:scaleX(0.9880)">Berater, Bernhard</div>
<div class="t" style="left:1302.45px;top:809.57px;font-size:14px;font-weight:400;color:#333;transform:scaleX(1.0005)">(nicht festgelegt)</div>
<div class="t" style="left:1659.65px;top:809.57px;font-size:14px;font-weight:400;color:#333;transform:scaleX(0.9985)">(nicht festgelegt)</div>
<div class="t" style="left:70.55px;top:845.17px;font-size:14px;font-weight:400;color:#333;transform:scaleX(0.9993)">Sicherungsmaßnahmen wählen…</div>
<div class="t" style="left:52.31px;top:888.97px;font-size:14px;font-weight:400;color:#31708f;transform:scaleX(1.0280)">Die Berechnung des abstrakten und konkreten Risikos ist maßgeblich von den verknüpften Risikoträgern und Sicherungsmaßnahmen abhängig. Wurden in diesen abhängigen Objekten Änderungen vorgenommen, kann es zur korrekten Berechnung erforderlich sein, die Seite neu zu laden!</div>
<div class="t" style="left:35.21px;top:985.67px;font-size:14px;font-weight:700;color:#fff;transform:scaleX(0.9706)">Speichern</div>
<div class="t" style="left:157.02px;top:985.37px;font-size:14px;font-weight:400;color:#333;transform:scaleX(1.0334)">Speichern und schließen</div>
<div class="t" style="left:370.00px;top:985.17px;font-size:14px;font-weight:400;color:#333;transform:scaleX(1.0322)">Abbrechen</div>
<div class="t" style="left:1973.03px;top:984.87px;font-size:14px;font-weight:400;color:#333;transform:scaleX(1.0187)">Löschen</div>
</body></html>
